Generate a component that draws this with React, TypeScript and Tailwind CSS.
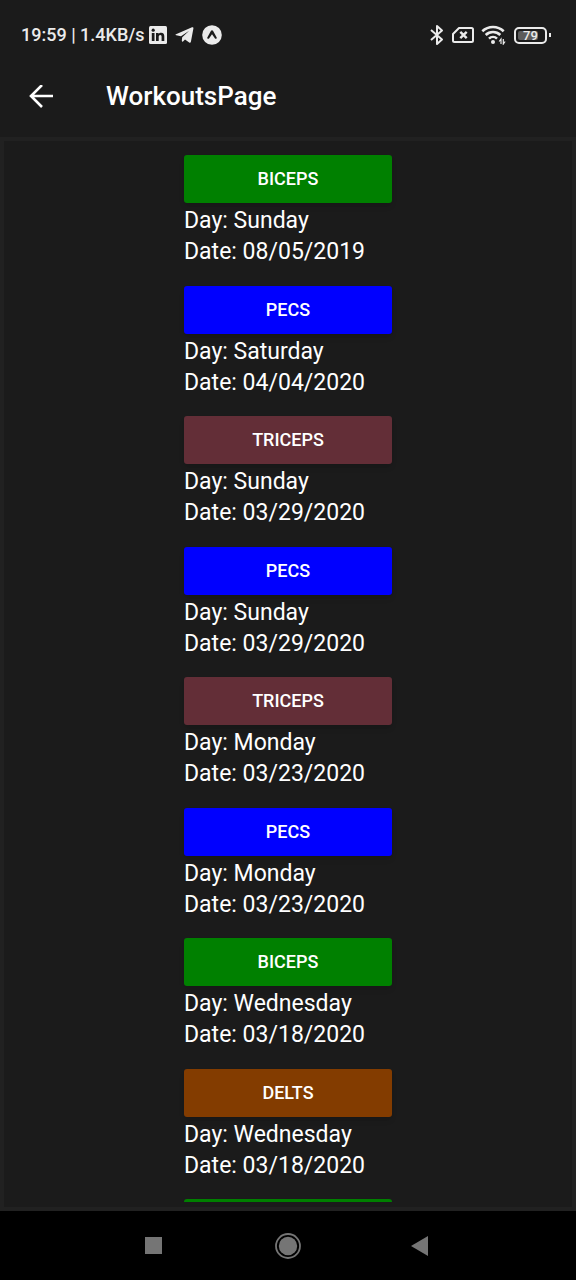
type Muscle = 'Biceps' | 'Pecs' | 'Triceps' | 'Delts';

interface Workout {
  muscle: Muscle;
  day: string;
  date: string;
}

const colors: Record<Muscle, string> = {
  Biceps: 'bg-[#008000]',
  Pecs: 'bg-[#0000ff]',
  Triceps: 'bg-[#632e37]',
  Delts: 'bg-[#833c00]',
};

const workouts: Workout[] = [
  { muscle: 'Biceps', day: 'Sunday', date: '08/05/2019' },
  { muscle: 'Pecs', day: 'Saturday', date: '04/04/2020' },
  { muscle: 'Triceps', day: 'Sunday', date: '03/29/2020' },
  { muscle: 'Pecs', day: 'Sunday', date: '03/29/2020' },
  { muscle: 'Triceps', day: 'Monday', date: '03/23/2020' },
  { muscle: 'Pecs', day: 'Monday', date: '03/23/2020' },
  { muscle: 'Biceps', day: 'Wednesday', date: '03/18/2020' },
  { muscle: 'Delts', day: 'Wednesday', date: '03/18/2020' },
];

function StatusBar() {
  return (
    <div className="flex h-14 shrink-0 items-center justify-between pt-3.5 pr-[25px] pl-[21px] text-[#ebebeb]">
      <div className="flex items-center">
        <span className="text-lg font-medium whitespace-nowrap">19:59 | 1.4KB/s</span>
        <svg className="ml-1 size-[18px]" viewBox="0 0 18 18" aria-hidden="true">
          <rect width="18" height="18" rx="1.5" fill="currentColor" />
          <g fill="#1b1b1b">
            <circle cx="4.2" cy="4.2" r="1.6" />
            <path d="M2.8 7h2.7v8H2.8zM7 7h2.6v1.1c.5-.8 1.4-1.3 2.6-1.3 2.3 0 3.1 1.4 3.1 3.7V15h-2.7v-4c0-1.2-.3-1.9-1.3-1.9-1.1 0-1.6.8-1.6 1.9v4H7z" />
          </g>
        </svg>
        <svg className="ml-2 h-[18px] w-5" viewBox="0 0 20 18" aria-hidden="true">
          <path
            d="M1 8.2 17 1.3c.9-.3 1.600.1 1.400 1.200l-2.500 13.200c-.2 1-.9 1.200-1.700.7l-4.200-3-2 2c-.5.500-1.200.2-1.200-.6l.4-3.600 7-6.500L6 10.300 1.200 9.200C.3 9 .2 8.500 1 8.200z"
            fill="currentColor"
          />
        </svg>
        <svg className="ml-[7px] size-5" viewBox="0 0 20 20" aria-hidden="true">
          <circle cx="10" cy="10" r="9.8" fill="currentColor" />
          <path
            d="M9 5.800c.4-.7 1.600-.7 2 0l3.700 6.700c.4 1-1 1.800-1.700 1L10 9.300l-3 4.200c-.7.800-2.100 0-1.700-1z"
            fill="#1b1b1b"
          />
        </svg>
      </div>
      <div className="flex items-center">
        <svg className="h-[22px] w-3.5" viewBox="0 0 14 22" fill="none" stroke="currentColor" strokeWidth="2" aria-hidden="true">
          <path d="M1 6l11 9.500L7 20V2l5 4.500L1 16" strokeLinejoin="round" />
        </svg>
        <svg className="ml-2 h-4 w-[22px]" viewBox="0 0 22 16" fill="none" stroke="currentColor" strokeWidth="2" aria-hidden="true">
          <path d="M7 1h12.500A1.500 1.500 0 0 1 21 2.500v11a1.500 1.500 0 0 1-1.500 1.500h-17A1.500 1.500 0 0 1 1 13.500V7z" strokeLinejoin="round" />
          <path d="M8.300 4.800l6.400 6.400M14.700 4.800l-6.400 6.400" strokeWidth="2.400" />
        </svg>
        <svg className="ml-[7px] h-5 w-[26px]" viewBox="0 0 26 20" fill="none" stroke="currentColor" strokeWidth="2.600" aria-hidden="true">
          <path d="M1.300 6.300a15.500 15.500 0 0 1 21.400 0M4.700 10a10.500 10.500 0 0 1 14.600 0M8 13.600a5.800 5.800 0 0 1 8 0" />
          <circle cx="12" cy="17" r="2" fill="currentColor" stroke="none" />
          <path d="M20 19v-5l-1.800 2.500M22.300 14v5l1.800-2.500" strokeWidth="1.200" />
        </svg>
        <div className="ml-[7px] flex items-center gap-0.5">
          <div className="relative flex h-[17px] w-[33px] items-center justify-center overflow-hidden rounded-[5px] border-2 border-current bg-[#1b1b1b]">
            <div className="absolute inset-y-0.5 left-0.5 w-5 rounded-xs bg-[#5c5c5c]" />
            <span className="relative text-[13px] leading-none font-medium">79</span>
          </div>
          <div className="h-1 w-0.5 bg-current" />
        </div>
      </div>
    </div>
  );
}

function Header() {
  return (
    <header className="flex h-[81px] shrink-0 items-center pl-[29px] text-white">
      <button type="button" aria-label="Back" className="flex">
        <svg className="size-6" viewBox="0 0 24 24" fill="none" stroke="currentColor" strokeWidth="2.600" aria-hidden="true">
          <path d="M24 11H2.500M13 0L2 11l11 11" />
        </svg>
      </button>
      <h1 className="ml-[53px] text-[26px] font-medium">WorkoutsPage</h1>
    </header>
  );
}

const buttonBase =
  'flex h-12 w-full items-center justify-center rounded-[3px] text-lg font-medium uppercase shadow-md';

function WorkoutItem({ workout }: { workout: Workout }) {
  return (
    <li className="odd:pb-[19px] even:pb-[18px]">
      <button type="button" className={`${buttonBase} ${colors[workout.muscle]}`}>
        {workout.muscle}
      </button>
      <div className="pt-0.5 text-[23px] leading-[31px]">
        <p>Day: {workout.day}</p>
        <p>Date: {workout.date}</p>
      </div>
    </li>
  );
}

export default function App() {
  return (
    <div className="flex h-screen flex-col bg-[#1b1b1b] font-[Roboto,sans-serif]">
      <StatusBar />
      <Header />
      <main className="min-h-0 flex-1 border-4 border-[#212121] pb-[5px]">
        <div className="h-full overflow-hidden pt-3.5">
          <ul className="mx-auto w-52 text-white">
            {workouts.map((workout, index) => (
              <WorkoutItem key={index} workout={workout} />
            ))}
            <li>
              <button type="button" aria-label="Biceps" className={`${buttonBase} ${colors.Biceps}`} />
            </li>
          </ul>
        </div>
      </main>
      <nav className="grid h-[69px] shrink-0 grid-cols-[1fr_40px_1fr] items-center bg-black text-[#757575]">
        <button type="button" aria-label="Recent apps" className="mr-[106px] justify-self-end">
          <span className="block size-[17px] bg-current" />
        </button>
        <button type="button" aria-label="Home" className="justify-self-center">
          <svg className="size-[26px]" viewBox="0 0 26 26" aria-hidden="true">
            <circle cx="13" cy="13" r="12" fill="none" stroke="currentColor" strokeWidth="1.800" />
            <circle cx="13" cy="13" r="9.200" fill="currentColor" />
          </svg>
        </button>
        <button type="button" aria-label="Back" className="ml-[103px] justify-self-start">
          <svg className="h-5 w-[17px]" viewBox="0 0 17 20" aria-hidden="true">
            <path d="M0 10L17 0v20z" fill="currentColor" />
          </svg>
        </button>
      </nav>
    </div>
  );
}
